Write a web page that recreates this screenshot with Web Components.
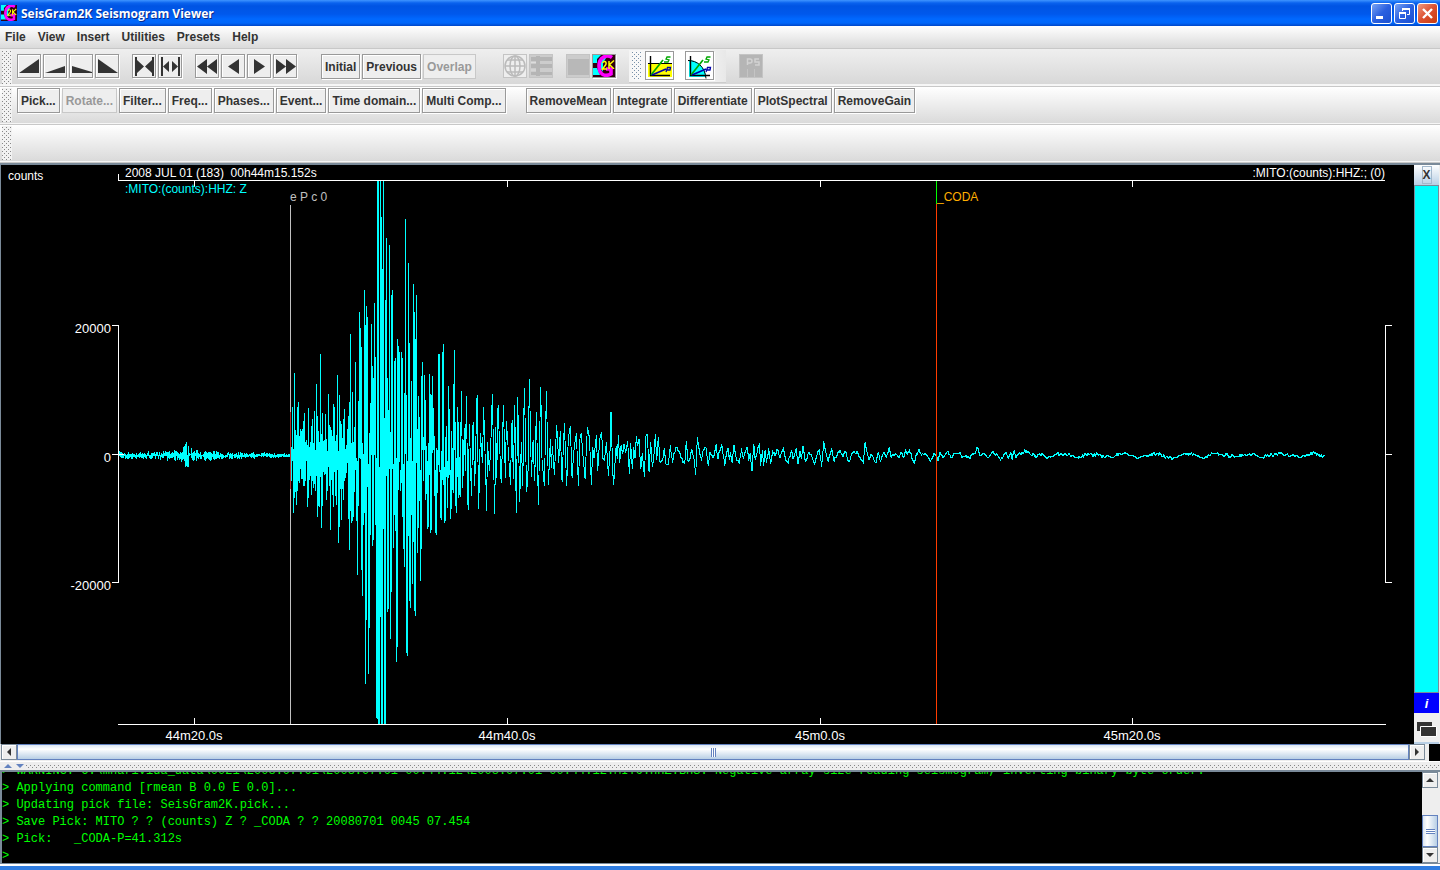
<!DOCTYPE html>
<html lang="en">
<head>
<meta charset="utf-8">
<title>SeisGram2K Seismogram Viewer</title>
<style>
html, body { margin: 0; height: 100%; }
body { font: 12px "Liberation Sans", Arial, sans-serif; color: #333; background: #eee; overflow: hidden; }
</style>
</head>
<body>
<seis-app></seis-app>
<script>
const define = (name, html, setup) => {
  const tpl = document.createElement('template');
  tpl.innerHTML = html;
  customElements.define(name, class extends HTMLElement {
    constructor() {
      super();
      this.attachShadow({ mode: 'open' }).append(tpl.content.cloneNode(true));
    }
    connectedCallback() { if (setup) setup.call(this, this.shadowRoot); }
  });
};

/* Staggered one-pixel dots for drag grips */
const dots = c => `background-image:conic-gradient(at 1px 1px,transparent 75%,${c} 0),conic-gradient(at 1px 1px,transparent 75%,${c} 0);background-size:4px 4px;background-position:0 1px,2px 3px`;

/* Application badge: cyan G, magenta arc and yellow 2K on dark ground */
define('seis-logo', `
<style>:host{display:block;width:18px;height:18px;flex:none}svg{display:block;width:100%;height:100%}</style>
<svg viewBox="0 0 22 22" aria-hidden="true">
<rect width="22" height="22" fill="#300010"/>
<path d="M0 0h8L4 4v4H0zM0 13h4l3 7H0zM9 3h4l-3 5v9l-3-5z" fill="#0ff"/>
<path d="M19 2.500C14-1 6 2 6 11s6 11 12 8v-5h-5" fill="none" stroke="#f0f" stroke-width="3.600"/>
<path d="M9.500 8c1.500-3 5-1 3 2l-3 4h4.500M16 6v8M21 5.500l-4.500 4 4.500 4.500" fill="none" stroke="#ff0" stroke-width="1.500"/>
<path d="M20 14h2v8h-2z" fill="#300010"/>
</svg>`);

define('title-bar', `
<style>
:host{display:flex;align-items:center;height:26px;flex:none;padding:0 1px;box-sizing:border-box;
background:linear-gradient(#3f95ff 0,#0a62ee 3px,#0054e3 6px,#0058ec 14px,#0068ff 19px,#0066fa 23px,#0046c8 26px)}
h1{flex:1;margin:0 0 0 4px;font:bold 12px "Open Sans","Noto Sans",sans-serif;color:#fff;text-shadow:1px 1px #0a2a8a;white-space:nowrap}
.ctl{display:flex;gap:2px;padding-right:1px}
button{width:21px;height:21px;box-sizing:border-box;border:1px solid #fff;border-radius:3px;padding:0;
background:linear-gradient(135deg,#7aa4f4,#2a60e0 50%,#1b50d0)}
button.close{background:linear-gradient(135deg,#f09a80,#dc5030 50%,#c83c10)}
svg{display:block;width:19px;height:19px}
seis-logo{width:16px;height:16px}
</style>
<seis-logo></seis-logo><h1>SeisGram2K Seismogram Viewer</h1>
<div class="ctl">
<button aria-label="Minimize"><svg viewBox="0 0 19 19"><path d="M4 12h7v3H4z" fill="#fff"/></svg></button>
<button aria-label="Restore"><svg viewBox="0 0 19 19"><path d="M7.500 7V4.500h7v6H12" fill="none" stroke="#fff"/><path d="M7 4h8v2H7zM4 8h7v2H4z" fill="#fff"/><path d="M4.500 8.500h6v6h-6z" fill="none" stroke="#fff"/></svg></button>
<button class="close" aria-label="Close"><svg viewBox="0 0 19 19"><path d="M5 5l9 9M14 5l-9 9" stroke="#fff" stroke-width="2.400"/></svg></button>
</div>`);

define('menu-bar', `
<style>
:host{display:block;height:21px;flex:none;padding-bottom:1px;border-bottom:1px solid #c8c8c8;background:linear-gradient(#fff,#dadada)}
nav{display:flex;gap:12px;padding-left:5px;height:21px;align-items:center}
button{border:0;background:none;padding:0;font:bold 12px "Liberation Sans",Arial,sans-serif;color:#333}
</style>
<nav><button>File</button><button>View</button><button>Insert</button><button>Utilities</button><button>Presets</button><button>Help</button></nav>`);

/* Toolbar with a dotted drag grip; buttons are slotted */
define('tool-bar', `
<style>
:host{display:flex;height:37px;flex:none;box-sizing:content-box;border-bottom:1px solid #c8c8c8;
background:linear-gradient(#fff,#dadada 36px,#f6f6f6 36px)}
:host([flat]){background:linear-gradient(#efefef,#d8d8d8 35px,#f6f6f6 35px)}
.grip{width:10px;margin:1px 5px 2px 2px;flex:none;background-color:#f2f2f2;${dots('#888')}}
.row{display:flex;gap:2px;align-items:flex-start;flex:1;padding-top:1px}
:host([flat]) .row{padding-top:0}
</style>
<div class="grip"></div><div class="row"><slot></slot></div>`);

define('text-button', `
<style>
:host{display:block;flex:none}
button{display:block;height:25px;box-sizing:border-box;border:1px solid #999;padding:0 3px;background:#eee;
box-shadow:1px 1px #fff,inset 1px 1px #fff;font:bold 12px "Liberation Sans",Arial,sans-serif;color:#333;white-space:nowrap}
button:disabled{color:#999;border-color:#c8c8c8;box-shadow:none}
</style>
<button><slot></slot></button>`, function (root) {
  root.querySelector('button').disabled = this.hasAttribute('disabled');
});

const dark = '#333';
const ICONS = {
  rampUp: `<path d="M1 18L21 4v14z" fill="${dark}"/>`,
  rampUpLow: `<path d="M1 18l20-7v7z" fill="${dark}"/>`,
  rampDownLow: `<path d="M2 11l20 6v1H2z" fill="${dark}"/>`,
  rampDown: `<path d="M2 4l20 14H2z" fill="${dark}"/>`,
  inward: `<path d="M2 2h2v19H2zM19 2h2v19h-2zM4 5l7 6.500L4 18zM19 5l-7 6.500 7 6.500z" fill="${dark}"/>`,
  outward: `<path d="M2 2h2v19H2zM19 2h2v19h-2zM10 6L4 11.500 10 17zM13 6l6 5.500-6 5.500z" fill="${dark}"/>`,
  rewind: `<path d="M11 4L1 11.500 11 19zM21 4l-10 7.500L21 19z" fill="${dark}"/>`,
  back: `<path d="M17 4L6 11.500 17 19z" fill="${dark}"/>`,
  fwd: `<path d="M6 4l11 7.500L6 19z" fill="${dark}"/>`,
  ffwd: `<path d="M2 4l10 7.500L2 19zM12 4l10 7.500L12 19z" fill="${dark}"/>`,
  globe: `<g fill="none" stroke="#bbb" stroke-width="1.500"><circle cx="11" cy="11" r="10"/><ellipse cx="11" cy="11" rx="5" ry="10"/><path d="M11 1v20M1 11h20M3 5h16M3 17h16"/></g>`,
  table: `<rect x="-1" y="-1" width="24" height="24" fill="#ccc"/><path d="M1 2h21v4H1zM1 9h21v4H1zM1 17h21v3H1zM6 1h4v20H6z" fill="#b5b5b5"/><path d="M1 7.500h5M1 15h5" stroke="#ddd"/>`,
  blank: `<rect x="-1" y="-1" width="25" height="24" fill="#ccc"/><rect x="1" y="4" width="21" height="16" fill="#b8b8b8"/>`,
  plotYellow: `<path d="M2 11h24v14H2z" fill="#ff0"/><path d="M2 11.500h24" stroke="#000"/>`,
  plotCyan: `<path d="M3 8c9 0 17 9 17 17H3z" fill="#0ff"/><path d="M2 8.500c9 0 17 6 18 18" fill="none" stroke="#000"/>`,
  ps: `<rect x="-1" y="-1" width="25" height="25" fill="#b5b5b5"/><path d="M7.500 10V4H10a2 2 0 0 1 0 4H7.500M19 4h-4v3h4v3h-4" fill="none" stroke="#d2d2d2" stroke-width="1.500"/><path d="M7.500 14v8M14.500 14v8" stroke="#c4c4c4"/>`
};
const AXES = `<path d="M4.500 4v20M4 23.500h20" stroke="#000" stroke-width="1.400" fill="none"/><path d="M5 23L17 8" stroke="#00a800" stroke-width="1.700"/><path d="M6 23l14-6" stroke="#00a" stroke-width="1.700"/><path d="M24.500 5h-3.500l-1 2 3 1-1 2h-4" fill="none" stroke="#00a800" stroke-width="1.300"/><path d="M20 20l1.500-4.500h3l-.5 2.500h-3" fill="none" stroke="#00a" stroke-width="1.300"/>`;
ICONS.plotYellow += AXES; ICONS.plotCyan += AXES;

define('icon-button', `
<style>
:host{display:block;flex:none}
button{display:block;width:24px;height:24px;box-sizing:border-box;padding:0;border:1px solid #999;background:#eee;box-shadow:1px 1px #fff,inset 1px 1px #fff;overflow:hidden}
button:disabled{border-color:#c4c4c4;box-shadow:none}
:host([large]) button{width:29px;height:29px;background:#fff}
svg{display:block;width:100%;height:100%}
seis-logo{width:22px;height:22px}
</style>
<button></button>`, function (root) {
  const b = root.querySelector('button'), n = this.getAttribute('icon');
  const s = this.hasAttribute('large') ? 27 : 22;
  b.setAttribute('aria-label', this.getAttribute('label') || n);
  b.disabled = this.hasAttribute('disabled');
  b.innerHTML = n === 'logo' ? '<seis-logo></seis-logo>' : `<svg viewBox="0 0 ${s} ${s}">${ICONS[n]}</svg>`;
});

define('main-tools', `
<style>
:host{display:contents}
.g{display:flex;gap:2px;margin:5px 11px 0 0}
.g.nav{margin-right:22px}
.g.txt{margin-right:25px}
.g.text-less{margin-right:11px}
.inner{display:flex;gap:11px;height:31px;padding:1px 12px 0 3px;margin:1px 11px 0 0;border-bottom:1px solid #ccc;background:linear-gradient(90deg,#f5f5f5,#fff 60%,#e8e8e8)}
.grip{width:10px;height:29px;margin-right:-8px;background-color:#f8f8f8;${dots('#7890a8')}}
</style>
<div class="g"><icon-button icon="rampUp"></icon-button><icon-button icon="rampUpLow"></icon-button><icon-button icon="rampDownLow"></icon-button><icon-button icon="rampDown"></icon-button></div>
<div class="g"><icon-button icon="inward"></icon-button><icon-button icon="outward"></icon-button></div>
<div class="g nav"><icon-button icon="rewind"></icon-button><icon-button icon="back"></icon-button><icon-button icon="fwd"></icon-button><icon-button icon="ffwd"></icon-button></div>
<div class="g txt"><text-button>Initial</text-button><text-button>Previous</text-button><text-button disabled>Overlap</text-button></div>
<div class="g"><icon-button icon="globe" disabled></icon-button><icon-button icon="table" disabled></icon-button></div>
<div class="g"><icon-button icon="blank" disabled></icon-button><icon-button icon="logo"></icon-button></div>
<div class="inner"><div class="grip"></div><icon-button icon="plotYellow" large></icon-button><icon-button icon="plotCyan" large></icon-button></div>
<div class="g"><icon-button icon="ps" disabled></icon-button></div>`);

define('process-tools', `
<style>:host{display:flex;gap:2px}div{width:16px}</style>
<text-button>Pick...</text-button><text-button disabled>Rotate...</text-button><text-button>Filter...</text-button><text-button>Freq...</text-button><text-button>Phases...</text-button><text-button>Event...</text-button><text-button>Time domain...</text-button><text-button>Multi Comp...</text-button><div></div><text-button>RemoveMean</text-button><text-button>Integrate</text-button><text-button>Differentiate</text-button><text-button>PlotSpectral</text-button><text-button>RemoveGain</text-button>`);

/* Sample envelopes of the strong motion, one value per column from x = 291.
   TOPS are thirds of a pixel below y = 180, BOTTOMS thirds below y = 450; -1 marks a column with no upper part. */
const TOPS = [800,682,806,579,750,765,681,666,768,747,753,747,723,699,786,780,795,684,801,786,738,717,789,693,810,612,708,753,786,522,762,699,783,780,702,777,813,642,735,741,750,768,672,681,783,765,585,813,645,723,732,774,717,687,807,795,747,708,666,462,789,636,786,741,546,-1,-1,663,396,444,501,789,822,330,435,378,411,-1,759,669,432,558,594,369,531,-1,0,0,-1,0,111,267,0,714,360,174,594,690,195,756,345,330,-1,543,534,-1,477,498,516,-1,516,534,-1,639,117,645,-1,249,489,774,603,-1,312,396,477,345,747,648,711,-1,588,546,771,585,660,798,-1,789,582,642,645,588,684,768,-1,804,810,522,522,-1,813,516,492,-1,771,738,-1,618,687,-1,753,804,612,510,726,-1,681,726];
const BOTTOMS = [93,33,189,144,126,165,123,93,99,57,87,87,108,108,93,33,171,144,90,78,135,93,114,102,123,78,201,168,171,81,234,168,66,75,72,150,123,51,108,240,90,135,171,66,138,165,60,279,231,117,210,117,150,93,84,69,39,207,300,183,219,213,201,126,60,213,375,168,24,27,360,438,225,189,702,510,111,672,534,255,15,288,270,15,225,804,808,822,822,501,822,822,237,822,822,78,486,477,57,567,426,57,294,195,243,636,591,120,36,123,99,201,297,351,12,609,618,258,453,474,195,402,276,483,498,39,309,234,153,393,297,0,93,0,150,132,237,231,75,249,240,9,0,138,249,255,129,45,66,204,210,90,105,219,213,81,174,84,75,207,177,120,129,0,168,189,81,144];
/* Turning points of the decaying coda, thirds of a pixel from (440,370) and from (720,420) */
const CODA_A = [57,260,60,378,64,63,68,350,73,175,76,300,79,78,84,417,88,162,94,375,99,155,104,345,106,270,111,75,116,413,121,190,127,275,131,111,140,420,142,216,148,300,152,232,157,72,164,430,167,170,170,320,174,106,183,335,187,240,190,105,196,320,199,152,211,342,216,150,220,325,224,105,229,426,233,82,239,392,244,215,248,345,253,54,260,362,264,300,268,27,274,318,279,210,284,330,289,126,295,402,302,51,306,270,313,345,319,63,325,342,331,207,334,290,337,228,343,312,350,165,356,275,361,183,366,332,373,160,380,345,385,200,391,168,396,320,403,225,409,190,415,345,420,200,424,190,428,245,435,324,442,171,448,200,454,342,458,232,462,262,469,195,473,300,479,205,485,186,488,262,493,270,499,216,505,315,510,240,512,126,514,126,517,290,521,342,528,228,532,265,535,195,539,275,543,225,548,250,552,222,557,245,563,213,568,308,572,220,577,295,581,232,585,262,589,198,592,225,597,207,602,295,607,250,613,318,618,195,622,192,627,303,632,215,637,288,641,265,646,192,650,268,655,201,660,275,667,270,673,235,678,282,685,280,691,225,697,275,703,245,709,232,716,240,720,250,727,270,734,278,739,213,744,272,750,265,755,238,761,258,767,312,772,202,777,235,784,270,790,238,797,230,805,285,810,245,818,262,823,255,828,222,833,265,839,240];
const CODA_B = [0,90,5,73,8,90,14,135,20,95,24,85,28,118,31,95,36,125,42,75,48,110,58,130,64,85,70,115,76,90,82,80,86,120,90,100,96,150,101,72,106,118,112,90,118,68,122,135,127,90,131,135,135,90,140,125,146,85,152,130,158,90,165,105,172,88,180,110,190,82,196,115,204,128,214,90,220,115,228,85,234,130,240,92,244,115,249,78,256,122,268,95,276,110,284,132,292,95,298,88,305,137,311,64,318,98,324,122,335,85,342,122,352,100,360,90,368,108,375,92,386,122,398,98,410,95,420,110,430,128,435,66,441,95,446,115,454,105,468,125,474,97,482,122,490,95,500,110,507,82,514,110,526,98,535,108,545,98,551,112,557,88,562,102,569,88,575,110,582,128,590,100,598,88,604,105,615,98,625,110,632,122,640,103,648,100,654,120,660,95,668,112,684,92,692,112,705,98,718,98,728,110,738,105,748,115,757,100,764,100,772,80,780,105,792,100,805,112,815,98,830,100,842,120,850,103,858,95,865,115,872,95,876,116,882,90,888,112,898,95];

function tracePath() {
  let seed = 7;
  const rnd = () => (seed = (seed * 16807) % 2147483647) / 2147483647;
  let d = '';
  for (let x = 119; x < 290; x++) {
    const burst = Math.exp(-Math.pow((x - 186) / 4, 2)) * 9 + Math.exp(-Math.pow((x - 190) / 26, 2)) * 2.5;
    const a = (x > 255 ? 2 : 3) + burst;
    const mid = 455 + (rnd() - .5) * 1.5;
    d += `M${x + .5} ${Math.round(mid - a * rnd())}V${Math.round(mid + 1 + a * rnd())}`;
  }
  TOPS.forEach((t, i) => {
    const top = t < 0 ? 458 + (i % 5) * 3 : 180 + t / 3;
    d += `M${291.5 + i} ${Math.round(Math.max(181, top))}V${Math.round(Math.max(top + 1, 450 + BOTTOMS[i] / 3))}`;
  });
  const pts = [];
  for (let i = 0; i < CODA_A.length; i += 2) pts.push([440 + CODA_A[i] / 3, 370 + CODA_A[i + 1] / 3]);
  for (let i = 0; i < CODA_B.length; i += 2) pts.push([720 + CODA_B[i] / 3, 420 + CODA_B[i + 1] / 3]);
  for (let x = 1021; x < 1325; x += 2 + Math.floor(rnd() * 3)) {
    const amp = x < 1050 ? 4 : 1.5;
    pts.push([x, 455 + Math.sin(x / 5) * 1.6 + (rnd() - .5) * amp * 2]);
  }
  /* One vertical stroke per pixel column, spanning everything the trace does inside it */
  const lo = {}, hi = {};
  const mark = (x, y) => {
    const c = Math.floor(x);
    lo[c] = Math.min(lo[c] ?? y, y);
    hi[c] = Math.max(hi[c] ?? y, y);
  };
  pts.slice(1).forEach(([x1, y1], i) => {
    const [x0, y0] = pts[i];
    const jitter = x0 > 640 && x1 - x0 > 1.5 ? (rnd() - .5) * 3 : 0;
    for (let k = 0; k <= 24; k++) {
      const f = k / 24;
      mark(x0 + (x1 - x0) * f, y0 + (y1 - y0) * f + jitter * Math.sin(f * Math.PI * 2));
    }
  });
  for (const c in lo) {
    const a = Math.round(lo[c]);
    d += `M${+c + .5} ${a}V${Math.max(a + 1, Math.round(hi[c]) + 1)}`;
  }
  return d;
}

define('seismogram-plot', `
<style>
:host{display:block;flex:1;min-width:0;overflow:hidden;background:#000;border-left:1px solid #7a8a99}
svg{display:block;width:100%;height:auto}
text{font:12px "Liberation Sans",Arial,sans-serif;fill:#fff;white-space:pre}
.scale text{font-size:13px}
.ax{stroke:#fff;fill:none}
.tr{stroke:#0ff;fill:none}
</style>
<svg viewBox="1 165 1413 579" shape-rendering="crispEdges" role="img" aria-label="Seismogram trace">
<path class="tr"/>
<path class="ax" d="M118.500 174v6.500H1385M194.500 181v6M507.500 181v6M820.500 181v6M1132.500 181v6M118 724.500H1386M194.500 718v6M507.500 718v6M820.500 718v6M1132.500 718v6M112 325.500h6.500v257H112M112 454.500h12M1392 325.500h-6.500v257h6.500M1386 454.500h6"/>
<path d="M290.500 205V724" stroke="#c0c0c0"/><path d="M290.500 412V489" stroke="#b03030"/>
<path d="M936.500 204V724" stroke="#ff3c00"/><path d="M936.500 181v23" stroke="#0f0" fill="none"/>
<text x="8" y="180">counts</text>
<text x="125" y="177">2008 JUL 01 (183)  00h44m15.152s</text>
<text x="125" y="193" style="fill:#0ff">:MITO:(counts):HHZ: Z</text>
<text x="1385" y="177" text-anchor="end">:MITO:(counts):HHZ:; (0)</text>
<text x="290" y="201" style="fill:#c0c0c0">e P c 0</text>
<text x="937" y="201" style="fill:#ffaf00">_CODA</text>
<g class="scale" text-anchor="end"><text x="111" y="333">20000</text><text x="111" y="462">0</text><text x="111" y="590">-20000</text></g>
<g class="scale" text-anchor="middle"><text x="194" y="740">44m20.0s</text><text x="507" y="740">44m40.0s</text><text x="820" y="740">45m0.0s</text><text x="1132" y="740">45m20.0s</text></g>
</svg>`, function (root) {
  root.querySelector('.tr').setAttribute('d', tracePath());
});

define('channel-strip', `
<style>
:host{display:flex;flex-direction:column;width:25px;flex:none;margin-right:1px;background:#eee}
button{border:0;padding:0;margin:0;font:bold 12px "Liberation Sans",Arial,sans-serif;color:#333}
.x{height:20px;flex:none;background:linear-gradient(#fff,#b8cfe5);display:flex;align-items:center;justify-content:center}
.x span{border:1px solid #a3b8cc;line-height:16px;width:8px;height:16px}
.chan{flex:1;background:#0ff;border:1px solid #7a8a99}
.info{height:20px;flex:none;background:#00f;color:#fff;font-style:italic;font-size:13px}
.win{height:31px;flex:none;background:#eee;border-bottom:2px solid #b8cfe5}
svg{display:block;width:25px;height:28px}
</style>
<button class="x" aria-label="Close channel"><span>X</span></button>
<button class="chan" aria-label="Select channel"></button>
<button class="info">i</button>
<button class="win" aria-label="Cascade windows"><svg viewBox="0 0 25 28"><path d="M3 8h15v9H3z" fill="#333"/><path d="M6.500 12.500h16v10h-16z" fill="#333" stroke="#fff"/></svg></button>`);

define('scroll-rail', `
<style>
:host{display:flex;box-sizing:border-box;background:#eee}
button{flex:none;box-sizing:border-box;width:16px;height:16px;padding:0;border:1px solid #7a8a99;background:#eee;box-shadow:inset 1px 1px #fff}
svg{display:block;width:14px;height:14px}
.track{flex:1;display:flex;min-width:0}
.thumb{flex:1;box-sizing:border-box;border:1px solid #6382bf;background:linear-gradient(#dbe6f3,#fff 30%,#b8cfe5);display:flex;align-items:center;justify-content:center}
.thumb i{display:block;width:5px;height:9px;background:repeating-linear-gradient(90deg,#6382bf 0 1px,#fff 1px 2px)}
:host([vertical]){flex-direction:column;width:16px}
:host([vertical]) .track{flex-direction:column;justify-content:flex-end}
:host([vertical]) .thumb{flex:none;height:32px;background:linear-gradient(90deg,#dbe6f3,#fff 30%,#b8cfe5)}
:host([vertical]) .thumb i{width:9px;height:5px;background:repeating-linear-gradient(#6382bf 0 1px,#fff 1px 2px)}
</style>
<button aria-label="Scroll back"><svg viewBox="0 0 14 14"><path/></svg></button><div class="track"><div class="thumb"><i></i></div></div><button aria-label="Scroll forward"><svg viewBox="0 0 14 14"><path/></svg></button>`, function (root) {
  const [a, b] = root.querySelectorAll('path');
  const v = this.hasAttribute('vertical');
  a.setAttribute('d', v ? 'M3 9l4-4 4 4z' : 'M9 3L5 7l4 4z');
  b.setAttribute('d', v ? 'M3 5l4 4 4-4z' : 'M5 3l4 4-4 4z');
  a.setAttribute('fill', '#333'); b.setAttribute('fill', '#333');
});

define('split-divider', `
<style>
:host{display:flex;align-items:center;height:11px;flex:none;background:#eee;box-sizing:border-box;border-top:1px solid #fff;border-bottom:2px solid #7a8a99}
svg{display:block;width:26px;height:7px}
div{flex:1;height:4px;${dots('#888')}}
</style>
<svg viewBox="0 0 26 7"><path d="M4 5l4-4 4 4zM16 1h8l-4 4z" fill="#6382bf"/></svg><div></div>`);

define('command-console', `
<style>
:host{display:flex;height:92px;flex:none;box-sizing:border-box;border-left:2px solid #7a8a99;border-bottom:1px solid #7a8a99;background:#eee}
.log{flex:1;min-width:0;overflow:hidden;display:flex;flex-direction:column;justify-content:flex-end;background:#000;color:#0f0}
p{margin:0;height:17px;flex:none;font:12px/17px "Liberation Mono","Courier New",monospace;white-space:pre}
p:last-child{height:15px}
scroll-rail{margin-right:2px}
</style>
<div class="log" role="log"><p>&gt; WARNING: C:\\mnarivida_data\\0021\\2008.07.01\\2008.07.01-00.44.12\\2008.07.01-00.44.12.MITO.HHZ.BHS: Negative array size reading seismogram, inverting binary byte order.</p><p>&gt; Applying command [rmean B 0.0 E 0.0]...</p><p>&gt; Updating pick file: SeisGram2K.pick...</p><p>&gt; Save Pick: MITO ? ? (counts) Z ? _CODA ? ? 20080701 0045 07.454</p><p>&gt; Pick:   _CODA-P=41.312s</p><p>&gt;</p></div>
<scroll-rail vertical></scroll-rail>`);

define('seis-app', `
<style>
:host{display:flex;flex-direction:column;height:100vh;background:#eee}
main{flex:1;min-height:0;display:flex;border-top:2px solid #7a8a99;box-sizing:border-box}
.h{display:flex;height:17px;flex:none;padding-left:1px}
.h scroll-rail{flex:1;height:16px}
.corner{width:11px;background:#000;margin-left:4px}
footer{height:6px;flex:none;box-sizing:border-box;border-top:2px solid #fff;background:#2f7de1}
</style>
<title-bar></title-bar>
<menu-bar></menu-bar>
<tool-bar flat><main-tools></main-tools></tool-bar>
<tool-bar><process-tools></process-tools></tool-bar>
<tool-bar></tool-bar>
<main><seismogram-plot></seismogram-plot><channel-strip></channel-strip></main>
<div class="h"><scroll-rail></scroll-rail><div class="corner"></div></div>
<split-divider></split-divider>
<command-console></command-console>
<footer></footer>`);
</script>
</body>
</html>
